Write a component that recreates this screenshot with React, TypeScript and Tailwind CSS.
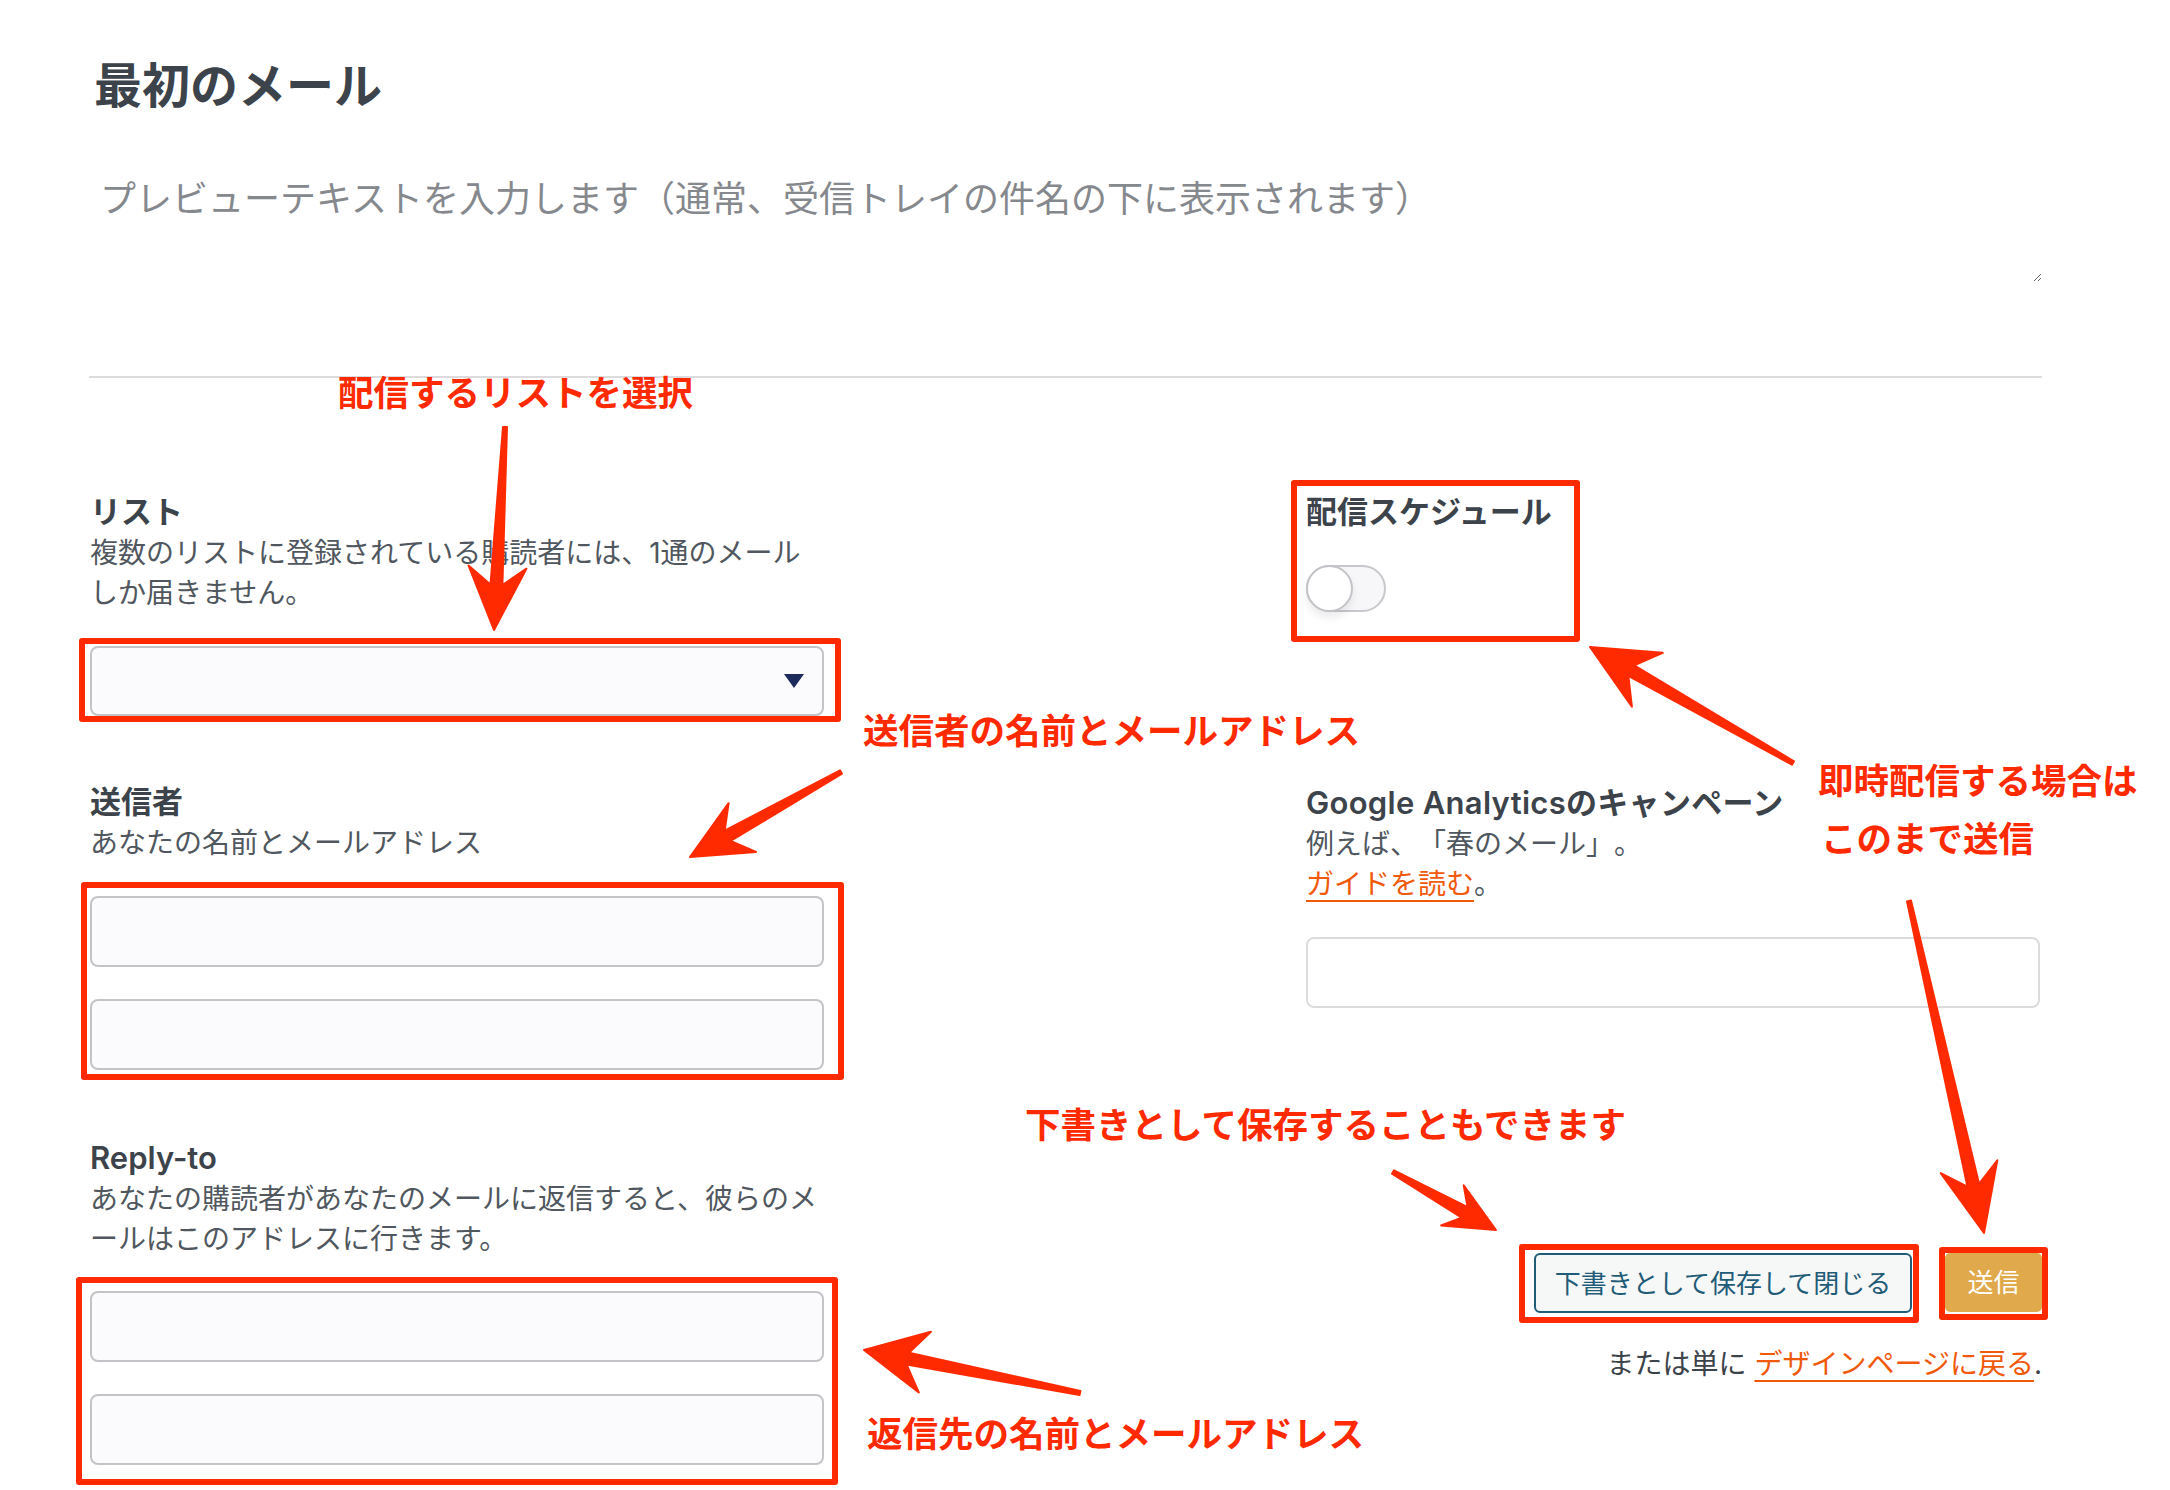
import React from 'react';

type Arrow = { x1: number; y1: number; x2: number; y2: number; head: number; headW: number };

// annotation arrows (page coordinates)
const arrows: Arrow[] = [
  { x1: 505, y1: 427, x2: 494, y2: 630, head: 63, headW: 58 },
  { x1: 841, y1: 772, x2: 690, y2: 857, head: 60, headW: 56 },
  { x1: 1793, y1: 763, x2: 1590, y2: 647, head: 66, headW: 62 },
  { x1: 1909, y1: 901, x2: 1984, y2: 1233, head: 68, headW: 58 },
  { x1: 1393, y1: 1172, x2: 1496, y2: 1230, head: 50, headW: 46 },
  { x1: 1080, y1: 1393, x2: 864, y2: 1350, head: 62, headW: 62 },
];

function arrowPoints(a: Arrow) {
  const dx = a.x2 - a.x1;
  const dy = a.y2 - a.y1;
  const len = Math.hypot(dx, dy);
  const ux = dx / len;
  const uy = dy / len;
  const nx = -uy;
  const ny = ux;
  const p = (d: number, o: number) => [a.x2 - ux * d + nx * o, a.y2 - uy * d + ny * o];
  const pts = [
    p(len, 2),
    p(a.head * 0.72, 6),
    p(a.head, a.headW / 2),
    [a.x2, a.y2],
    p(a.head, -a.headW / 2),
    p(a.head * 0.72, -6),
    p(len, -2),
  ];
  return pts.map((q) => q.map((v) => v.toFixed(1)).join(',')).join(' ');
}

const Note = ({ className, children }: { className: string; children: React.ReactNode }) => (
  <div className={`pointer-events-none absolute whitespace-nowrap text-[35.5px] font-bold leading-[44px] text-[#ff2a00] ${className}`}>
    {children}
  </div>
);

const Label = ({ children }: { children: React.ReactNode }) => (
  <div className="text-[31px] font-semibold leading-[42px] text-[#3c434a]">{children}</div>
);

const Desc = ({ children }: { children: React.ReactNode }) => (
  <div className="text-[28px] leading-[40px] text-[#50575e]">{children}</div>
);

const Field = () => (
  <input type="text" className="block h-[71px] w-full rounded-[8px] border-2 border-[#c3c4c7] bg-[#fbfbfd] px-4 outline-none" />
);

export default function App() {
  return (
    <div className="relative min-h-[1490px] w-full overflow-hidden bg-white font-['Inter','Noto_Sans_CJK_JP',sans-serif] [text-spacing-trim:space-all]">
      <div className="pl-[90px] pr-[128px] pt-[58px]">
        <h1 className="pl-[4px] text-[48px] font-bold leading-[56px] text-[#3c434a]">最初のメール</h1>

        <textarea
          className="mt-[53px] block h-[115px] w-full border-0 bg-white px-[10px] pt-[8px] text-[36px] leading-[49px] text-[#3c434a] outline-none [text-spacing-trim:space-all] placeholder:text-[#85888d] placeholder:[text-spacing-trim:space-all]"
          placeholder="プレビューテキストを入力します（通常、受信トレイの件名の下に表示されます）"
        />

        <div className="-ml-px mt-[94px] h-[2px] bg-[#dcdcde]" />

        <div className="mt-[113px] flex">
          {/* left column */}
          <div className="w-[734px]">
            <Label>リスト</Label>
            <Desc>複数のリストに登録されている購読者には、1通のメールしか届きません。</Desc>
            <div className="relative mt-[33px]">
              <div className="flex h-[70px] items-center justify-end rounded-[8px] border-2 border-[#c3c4c7] bg-[#fbfbfd] pr-[18px]">
                <svg width="20" height="14" viewBox="0 0 20 14">
                  <polygon points="0,0 20,0 10,14" fill="#1d2a5c" />
                </svg>
              </div>
              <div className="pointer-events-none absolute -bottom-[6px] -left-[11px] -right-[17px] -top-[8px] rounded-[3px] border-[6px] border-[#ff2a00]" />
            </div>

            <div className="mt-[65px]">
              <Label>送信者</Label>
              <Desc>あなたの名前とメールアドレス</Desc>
            </div>
            <div className="relative mt-[33px] flex flex-col gap-[32px]">
              <Field />
              <Field />
              <div className="pointer-events-none absolute -bottom-[10px] -left-[9px] -right-[20px] -top-[14px] rounded-[3px] border-[6px] border-[#ff2a00]" />
            </div>

            <div className="mt-[67px]">
              <Label>Reply-to</Label>
              <Desc>あなたの購読者があなたのメールに返信すると、彼らのメールはこのアドレスに行きます。</Desc>
            </div>
            <div className="relative mt-[32px] flex flex-col gap-[32px]">
              <Field />
              <Field />
              <div className="pointer-events-none absolute -bottom-[20px] -left-[14px] -right-[14px] -top-[14px] rounded-[3px] border-[6px] border-[#ff2a00]" />
            </div>
          </div>

          {/* right column */}
          <div className="ml-[482px] w-[736px]">
            <div className="relative">
              <Label>配信スケジュール</Label>
              <div className="relative mt-[32px] h-[47px] w-[80px] rounded-full border-2 border-[#c8c8cc] bg-[#f7f7fa]">
                <div className="absolute -left-[2px] -top-[2px] h-[47px] w-[47px] rounded-full border-2 border-[#c3c4c7] bg-white shadow-[0_6px_8px_rgba(0,0,0,0.08)]" />
              </div>
              <div className="pointer-events-none absolute -left-[15px] -top-[11px] h-[162px] w-[289px] rounded-[3px] border-[6px] border-[#ff2a00]" />
            </div>

            <div className="mt-[170px]">
              <div className="text-[31px] font-semibold leading-[42px] tracking-[0.3px] text-[#3c434a]">Google Analyticsのキャンペーン</div>
              <Desc>例えば、「春のメール」。</Desc>
              <Desc>
                <a className="text-[#f0590a] underline decoration-2 underline-offset-[6px]">ガイドを読む</a>。
              </Desc>
            </div>
            <input type="text" className="mt-[33px] block h-[71px] w-[734px] rounded-[8px] border-2 border-[#dcdcde] bg-white px-4 outline-none" />

            <div className="mt-[245px] flex justify-end gap-[33px]">
              <div className="relative">
                <button className="h-[60px] w-[378px] rounded-[6px] border-2 border-[#1f5c78] bg-[#f6f7f7] text-[26px] text-[#1f5c78]">
                  下書きとして保存して閉じる
                </button>
                <div className="pointer-events-none absolute -bottom-[10px] -left-[15px] -right-[7px] -top-[9px] rounded-[3px] border-[6px] border-[#ff2a00]" />
              </div>
              <div className="relative">
                <button className="h-[59px] w-[97px] rounded-[5px] bg-[#e0a94b] text-[26px] text-white">送信</button>
                <div className="pointer-events-none absolute -bottom-[7px] -left-[6px] -right-[6px] -top-[6px] rounded-[3px] border-[6px] border-[#ff2a00]" />
              </div>
            </div>
            <div className="mt-[31px] text-right text-[28px] leading-[40px] text-[#3c434a]">
              または単に <a className="text-[#f0590a] underline decoration-2 underline-offset-[6px]">デザインページに戻る</a>.
            </div>
          </div>
        </div>
      </div>

      {/* annotation layer */}
      <svg className="pointer-events-none absolute left-0 top-0" width="2170" height="1490">
        {arrows.map((a, i) => (
          <polygon key={i} points={arrowPoints(a)} fill="#ff2a00" stroke="#ff2a00" strokeWidth="2" strokeLinejoin="round" />
        ))}
      </svg>
      <Note className="left-[338px] top-[372px]">配信するリストを選択</Note>
      <Note className="left-[863px] top-[710px]">送信者の名前とメールアドレス</Note>
      <Note className="left-[1818px] top-[760px]">即時配信する場合は</Note>
      <Note className="left-[1821px] top-[818px]">このまで送信</Note>
      <Note className="left-[1025px] top-[1104px]">下書きとして保存することもできます</Note>
      <Note className="left-[867px] top-[1413px]">返信先の名前とメールアドレス</Note>
    </div>
  );
}
